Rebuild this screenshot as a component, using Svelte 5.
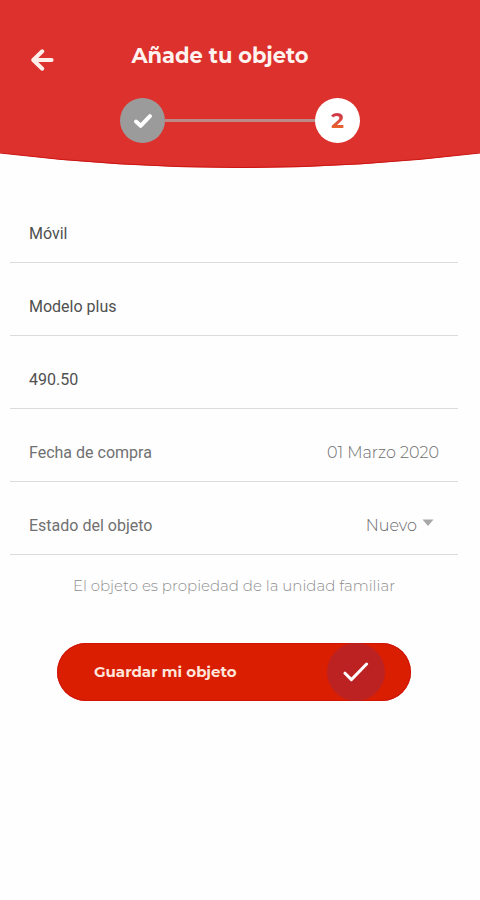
<script lang="ts">
  const STATES = ["Nuevo", "Seminuevo", "Usado"];

  let tipo = $state("Móvil");
  let modelo = $state("Modelo plus");
  let precio = $state("490.50");
  let fecha = $state("01 Marzo 2020");
  let estado = $state("Nuevo");

  function save(e: SubmitEvent) {
    e.preventDefault();
  }
</script>

<div class="screen">
  <header>
    <div class="top">
      <div class="bar">
        <button class="back" type="button" aria-label="Volver">
          <svg viewBox="0 0 24 24" width="24" height="24">
            <path d="M12.3 3.3 3.2 12l9.1 8.7M3.6 12H21.6" />
          </svg>
        </button>
        <h1>Añade tu objeto</h1>
      </div>
      <div class="steps">
        <span class="step done">
          <svg viewBox="0 0 20 16" width="20" height="16">
            <path d="M3 8.6 7.6 12.8 17 3.2" />
          </svg>
        </span>
        <span class="track"></span>
        <span class="step current"><b>2</b></span>
      </div>
    </div>
    <svg class="curve" viewBox="0 0 480 15" preserveAspectRatio="none">
      <path class="fill" d="M0 0Q240 30 480 0Z" />
      <path class="edge" d="M0 0Q240 29 480 0" />
    </svg>
  </header>

  <form onsubmit={save}>
    <div class="fields">
      <div class="row">
        <input type="text" aria-label="Tipo de objeto" bind:value={tipo} />
      </div>
      <div class="row">
        <input type="text" aria-label="Modelo" bind:value={modelo} />
      </div>
      <div class="row">
        <input type="text" inputmode="decimal" aria-label="Precio" bind:value={precio} />
      </div>
      <div class="row">
        <label for="fecha">Fecha de compra</label>
        <input id="fecha" class="value" type="text" bind:value={fecha} />
      </div>
      <div class="row">
        <label for="estado">Estado del objeto</label>
        <select id="estado" class="value" bind:value={estado}>
          {#each STATES as s (s)}<option>{s}</option>{/each}
        </select>
        <svg class="caret" viewBox="0 0 12 8" width="12" height="8">
          <path d="M0.5 0.5H11.5L6 7Z" />
        </svg>
      </div>
    </div>

    <p class="note">El objeto es propiedad de la unidad familiar</p>

    <button class="save" type="submit">
      <span>Guardar mi objeto</span>
      <span class="ok">
        <svg viewBox="0 0 26 20" width="26" height="20">
          <path d="M2 11.2 8.4 17.6 23.6 2" />
        </svg>
      </span>
    </button>
  </form>
</div>

<style>
  :global(body) {
    background: #fefefe;
  }
  .screen {
    --brand: Montserrat, Inter, sans-serif;
    font-family: Roboto, sans-serif;
    font-size: 16px;
    line-height: 20px;
    color: #505050;
  }
  button,
  input,
  select {
    font: inherit;
    color: inherit;
    border: none;
    background: none;
    padding: 0;
    margin: 0;
  }
  button {
    cursor: pointer;
  }
  .top {
    background: #dc312d;
    padding: 44px 0 10px;
  }
  .bar {
    display: grid;
    grid-template-columns: 60px 1fr 100px;
    height: 28px;
  }
  .back {
    align-self: end;
    justify-self: end;
    width: 30px;
    height: 24px;
    text-align: left;
  }
  .back svg,
  .step svg,
  .ok svg {
    display: block;
    fill: none;
    stroke: #fff;
  }
  .back svg {
    stroke: #fdeeea;
    stroke-width: 4;
    stroke-linecap: round;
    stroke-linejoin: round;
  }
  h1 {
    margin: 0;
    text-align: center;
    font-family: var(--brand);
    font-size: 21px;
    font-weight: 700;
    line-height: 24px;
    color: #fff3f0;
  }
  .steps {
    display: flex;
    align-items: center;
    width: 240px;
    margin: 26px auto 0;
  }
  .step {
    display: flex;
    align-items: center;
    justify-content: center;
    width: 45px;
    height: 45px;
    border-radius: 50%;
  }
  .step svg {
    stroke-width: 4;
    stroke-linecap: round;
    stroke-linejoin: round;
  }
  .done {
    background: #9c9b9b;
  }
  .current {
    background: #fff;
    font-family: var(--brand);
    font-size: 22px;
  }
  .current b {
    background: linear-gradient(#cf3a48 20%, #e8642c 85%);
    background-clip: text;
    color: transparent;
  }
  .track {
    flex: 1;
    height: 3px;
    background: #b98a87;
  }
  .curve {
    display: block;
    width: 100%;
    height: 15px;
  }
  .fill {
    fill: #dc312d;
  }
  .edge {
    fill: none;
    stroke: #cc1512;
    stroke-width: 1;
  }
  .fields {
    margin: 22px 22px 0 10px;
  }
  .row {
    display: flex;
    align-items: flex-end;
    box-sizing: border-box;
    height: 73px;
    padding: 0 19px 18px;
    border-bottom: 1px solid #dcdcdc;
    position: relative;
  }
  .row input {
    flex: 1;
    min-width: 0;
    height: 20px;
    outline: none;
  }
  label {
    color: #707070;
  }
  .row .value {
    flex: 1;
    min-width: 0;
    height: 20px;
    font-family: var(--brand);
    font-weight: 300;
    color: #6c6c6c;
    text-align: right;
  }
  select {
    appearance: none;
    text-align-last: right;
    outline: none;
  }
  .row select.value {
    padding-right: 22px;
  }
  .caret {
    position: absolute;
    right: 24px;
    bottom: 27px;
    fill: #a8a8a8;
    pointer-events: none;
  }
  .note {
    margin: 21px 0 0;
    padding-right: 12px;
    text-align: center;
    font-family: var(--brand);
    font-size: 15px;
    font-weight: 300;
    color: #8e8e8e;
  }
  .save {
    display: flex;
    align-items: center;
    justify-content: space-between;
    box-sizing: border-box;
    width: calc(100% - 126px);
    height: 58px;
    margin: 47px 69px 0 57px;
    padding: 0 26px 0 37px;
    border-radius: 29px;
    background: #da1e02;
    box-shadow: inset 0 0 0 1px #cf1408;
    font-family: var(--brand);
    font-size: 15px;
    font-weight: 700;
    color: #ffe6dc;
  }
  .ok {
    display: flex;
    align-items: center;
    justify-content: center;
    width: 58px;
    height: 58px;
    border-radius: 50%;
    background: #bd2222;
  }
  .ok svg {
    stroke-width: 3;
    stroke-linecap: round;
    stroke-linejoin: round;
  }
</style>
